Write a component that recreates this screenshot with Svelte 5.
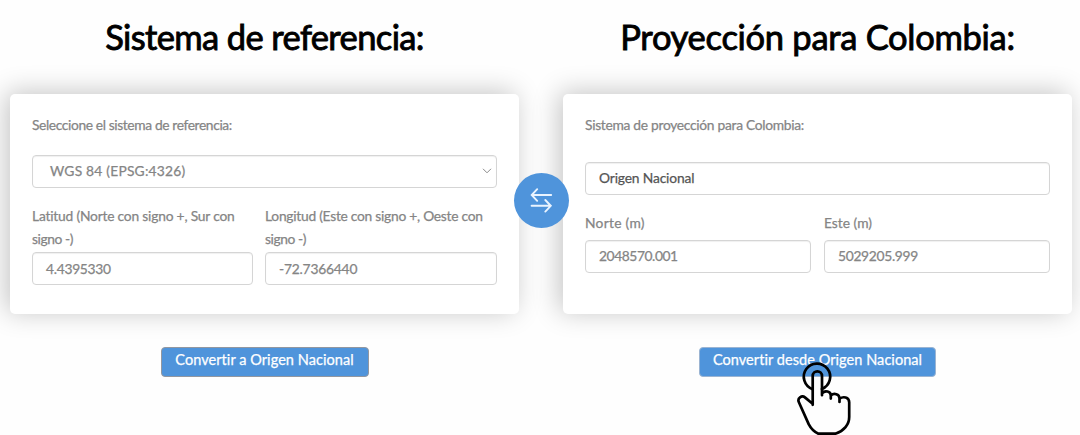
<script>
  let system = $state('WGS 84 (EPSG:4326)');
</script>

<main>
  <section class="column">
    <h1>Sistema de referencia:</h1>
    <div class="card">
      <p class="intro ref">Seleccione el sistema de referencia:</p>
      <div class="box select">
        <span class="epsg">{system}</span>
        <svg width="10" height="6" viewBox="0 0 10 6"><path d="M1 .8 5 4.8 9 .8" /></svg>
      </div>
      <div class="fields left">
        <div class="field">
          <p class="label"><span class="lat">Latitud (Norte con signo +, Sur con</span><br /><span class="sign">signo -)</span></p>
          <div class="box"><span class="num1">4.4395330</span></div>
        </div>
        <div class="field">
          <p class="label"><span class="lon">Longitud (Este con signo +, Oeste con</span><br /><span class="sign">signo -)</span></p>
          <div class="box"><span class="num2">-72.7366440</span></div>
        </div>
      </div>
    </div>
    <button class="to"><span>Convertir a Origen Nacional</span></button>
  </section>

  <section class="column">
    <h1 class="second">Proyección para Colombia:</h1>
    <div class="card">
      <p class="intro proj">Sistema de proyección para Colombia:</p>
      <div class="box origin"><span class="dark">Origen Nacional</span></div>
      <div class="fields right">
        <div class="field">
          <p class="label"><span class="north">Norte (m)</span></p>
          <div class="box"><span class="num3">2048570.001</span></div>
        </div>
        <div class="field">
          <p class="label"><span class="east">Este (m)</span></p>
          <div class="box"><span class="num4">5029205.999</span></div>
        </div>
      </div>
    </div>
    <button class="from"><span>Convertir desde Origen Nacional</span></button>
  </section>

  <div class="swap">
    <svg width="55" height="55" viewBox="0 0 55 55">
      <path d="M37.2 22H18M23.2 16.2 17.7 22 23.2 27.8M17.6 32.8H36.8M31.3 27 36.8 32.8 31.3 38.6" />
    </svg>
  </div>

  <svg class="hand" width="62" height="75" viewBox="0 0 62 75">
    <path d="M22.6 29.2A13.2 13.2 0 1 1 31.9 29" />
    <path d="M22.7 44.8V16.2C22.7 9.8 32 9.8 32 16.2V35.2M22.6 43.8 15.2 37.6C11.8 34.8 7 38 8.9 42.3L18.8 64.4Q22.4 71.2 28.4 73.7H45.4C54 71 59.2 64.5 59.2 57V42.3C59.2 36.8 53 36.2 49.5 38.7V42M32 33.3C35 29.8 40.8 31.3 40.8 35.5V38.6M40.8 35.6C44 32.4 49.5 34.2 49.5 38.5V42" />
  </svg>
</main>

<style>
  :global(body) { margin: 0; background: #fff; }
  main {
    position: relative;
    display: grid;
    grid-template-columns: 509px 509px;
    column-gap: 44px;
    width: 1080px;
    height: 435px;
    padding-left: 10px;
    box-sizing: border-box;
    overflow: hidden;
    background: #fefefe;
    font-family: Lato, "Liberation Sans", sans-serif;
  }
  .column { display: flex; flex-direction: column; align-items: center; }
  h1 {
    margin: 0;
    padding-top: 16px;
    height: 78px;
    line-height: 42px;
    font-size: 34.5px;
    font-weight: 400;
    color: #000;
    letter-spacing: -0.63px;
    -webkit-text-stroke: 0.9px #000;
    white-space: nowrap;
  }
  .second { letter-spacing: -0.29px; }
  .card {
    width: 509px;
    height: 219.5px;
    padding: 21px 22px 0;
    box-sizing: border-box;
    border-radius: 5px;
    background: #fff;
    box-shadow: -4px -2px 27px rgba(0, 0, 0, 0.23);
    color: #858585;
    font-size: 13.8px;
    -webkit-text-stroke: 0.25px;
    white-space: nowrap;
  }
  p { margin: 0; }
  .intro { height: 40px; line-height: 20px; }
  .ref { letter-spacing: -0.38px; }
  .proj { height: 46.5px; letter-spacing: -0.29px; }
  .epsg { letter-spacing: 0.22px; }
  .lat { letter-spacing: -0.2px; }
  .lon { letter-spacing: -0.26px; }
  .sign { letter-spacing: -0.4px; }
  .num1 { letter-spacing: -0.28px; }
  .num2 { letter-spacing: -0.2px; }
  .num3 { letter-spacing: -0.42px; }
  .num4 { letter-spacing: -0.3px; }
  .north { letter-spacing: 0.28px; }
  .box {
    display: flex;
    align-items: center;
    height: 33px;
    padding: 0 14px 1px 13px;
    box-sizing: border-box;
    border: 1.3px solid #d5d5d5;
    border-radius: 4px;
    background: #fff;
    box-shadow: inset 0 1px 1px #00000010;
  }
  .select { justify-content: space-between; padding: 0 4px 2px 17px; }
  .select svg { fill: none; stroke: #8a8a8a; stroke-width: 1; }
  .dark { color: #555; letter-spacing: -0.15px; }
  .fields { display: grid; }
  .left { grid-template-columns: 221px 232px; column-gap: 12px; padding-top: 16px; }
  .right { grid-template-columns: 226px 226px; column-gap: 13px; padding-top: 16px; }
  .label { line-height: 23px; }
  .left .label { height: 48px; }
  .right .label { height: 29px; }
  button {
    display: flex;
    justify-content: center;
    height: 30px;
    margin-top: 33px;
    padding: 0;
    box-sizing: border-box;
    border: 1px solid #9297a0;
    border-radius: 4px;
    background: #4f94db;
    color: #fff;
    font: 400 14.5px/23px Lato, "Liberation Sans", sans-serif;
    letter-spacing: 0.06px;
    -webkit-text-stroke: 0.25px;
    white-space: nowrap;
  }
  .to { width: 208px; }
  .from { width: 237px; border-color: #9bb4d2; }
  .swap {
    position: absolute;
    left: 513.5px;
    top: 173px;
    width: 55px;
    height: 55px;
    border-radius: 50%;
    background: #4f94db;
  }
  .swap svg { display: block; fill: none; stroke: #eaf4ff; stroke-width: 1.9; stroke-linecap: round; }
  .hand { position: absolute; left: 790px; top: 360px; fill: none; stroke: #000; stroke-width: 2.7; stroke-linejoin: round; stroke-linecap: round; }
</style>
